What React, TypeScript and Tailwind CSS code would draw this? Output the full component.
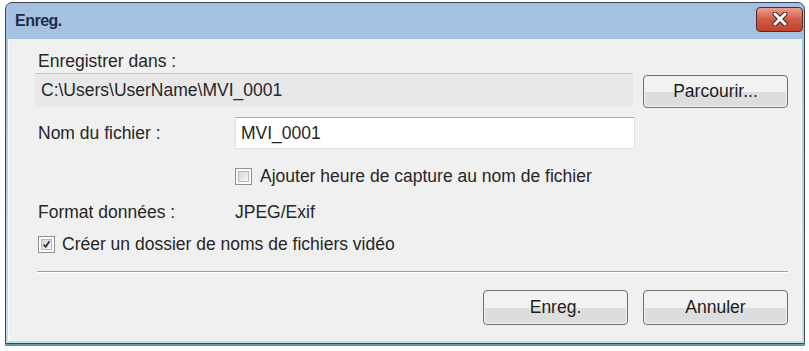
import React from 'react';

const font = { fontFamily: '"Liberation Sans", Arial, sans-serif' };

const CheckBox: React.FC<{ checked?: boolean }> = ({ checked }) => (
  <div className="w-[17px] h-[17px] shrink-0 border border-[#8f8f8f] bg-white p-[2px]">
    <div className="w-full h-full border border-[#b4b8bd] bg-gradient-to-br from-[#d6d6d6] to-[#f6f6f6] flex items-center justify-center">
      {checked && (
        <svg width="11" height="11" viewBox="0 0 11 11">
          <path d="M2 5.5 L4.5 8.5 L9 1.5" fill="none" stroke="#1f2b4d" strokeWidth="2" strokeLinejoin="round" />
        </svg>
      )}
    </div>
  </div>
);

const Button: React.FC<{ label: string; className?: string }> = ({ label, className = '' }) => (
  <button
    className={`w-[145px] rounded-[4px] border border-[#707070] p-[1px] text-[17.5px] text-[#1c1c1c] ${className}`}
  >
    <div className="w-full h-full rounded-[3px] flex flex-col overflow-hidden relative">
      <div className="flex-1 bg-[#f2f2f2]" />
      <div className="flex-1 bg-[#dddddd]" />
      <span className="absolute inset-0 flex items-center justify-center">{label}</span>
    </div>
  </button>
);

export default function App() {
  return (
    <div className="w-[809px] h-[351px] bg-white overflow-hidden" style={font}>
      <div className="ml-[5px] mt-[2px] w-[800px] h-[342px] border border-[#3d4652] rounded-t-[7px] bg-gradient-to-b from-[#a3c0e2] to-[#c6d9ee] flex flex-col">
        {/* title bar */}
        <div className="h-[36px] flex items-center justify-between pl-[9px] pr-[1px]">
          <span
            className="text-[16px] font-bold text-[#1d2d48] tracking-[-0.5px]"
            style={{ fontFamily: '"Liberation Sans Narrow", "Liberation Sans", Arial, sans-serif' }}
          >
            Enreg.
          </span>
          <div className="w-[47px] h-[25px] mt-[-4px] rounded-[4px] border border-[#5a2a22] bg-gradient-to-b from-[#e9a08f] via-[#d25a44] to-[#c0432c] flex items-center justify-center">
            <svg width="16" height="14" viewBox="0 0 16 14">
              <path d="M3 2 L13 12 M13 2 L3 12" stroke="#4a2520" strokeWidth="5" strokeLinecap="round" />
              <path d="M3 2 L13 12 M13 2 L3 12" stroke="#ffffff" strokeWidth="3" strokeLinecap="round" />
            </svg>
          </div>
        </div>

        {/* body */}
        <div className="flex-1 mx-[2px] mb-[2px] bg-[#f0f0f0] border-l border-r border-[#fbfbfb] pl-[29px] pr-[13px] pt-[12px] text-[17.5px] text-[#262626]">
          <div className="h-[20px] leading-[20px]">Enregistrer dans :</div>

          <div className="mt-[2px] flex items-start">
            <div className="-ml-[3px] w-[598px] h-[34px] bg-[#e8e8e8] border-t border-[#c6c6c6] flex items-center pl-[6px]">
              C:\Users\UserName\MVI_0001
            </div>
            <Button label="Parcourir..." className="ml-[10px] mt-[2px] h-[33px]" />
          </div>

          <div className="mt-[9px] flex items-center">
            <div className="w-[197px]">Nom du fichier :</div>
            <div className="w-[400px] h-[32px] bg-white border border-[#e2e3ea] border-t-[#abadb3] flex items-center pl-[5px]">
              MVI_0001
            </div>
          </div>

          <div className="mt-[17px] ml-[197px] h-[20px] flex items-center gap-[8px]">
            <CheckBox />
            <span>Ajouter heure de capture au nom de fichier</span>
          </div>

          <div className="mt-[16px] h-[20px] flex items-center">
            <div className="w-[197px]">Format données :</div>
            <div>JPEG/Exif</div>
          </div>

          <div className="mt-[12px] h-[20px] flex items-center gap-[7px]">
            <CheckBox checked />
            <span>Créer un dossier de noms de fichiers vidéo</span>
          </div>

          <div className="mt-[17px] -ml-[1px] border-t border-[#a0a0a0] border-b border-b-white" />

          <div className="mt-[17px] flex justify-end gap-[15px]">
            <Button label="Enreg." className="h-[35px]" />
            <Button label="Annuler" className="h-[35px]" />
          </div>
        </div>
      </div>
      <div className="ml-[5px] w-[800px] h-[2px] bg-[#5b9f9b]" />
    </div>
  );
}
